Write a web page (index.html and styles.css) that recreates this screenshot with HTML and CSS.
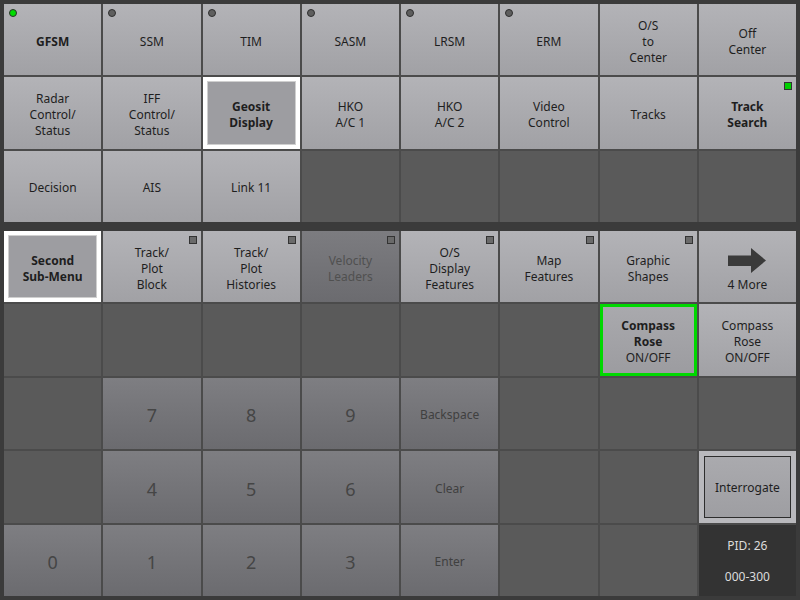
FILE: index.html
```html
<!DOCTYPE html>
<html>
<head>
<meta charset="utf-8">
<link rel="stylesheet" href="styles.css">
</head>
<body>
<div class="screen">
  <div class="panel top">
    <div class="btn bold"><span class="dot on"></span><span>GFSM</span></div>
    <div class="btn"><span class="dot"></span><span>SSM</span></div>
    <div class="btn"><span class="dot"></span><span>TIM</span></div>
    <div class="btn"><span class="dot"></span><span>SASM</span></div>
    <div class="btn"><span class="dot"></span><span>LRSM</span></div>
    <div class="btn"><span class="dot"></span><span>ERM</span></div>
    <div class="btn"><span>O/S<br>to<br>Center</span></div>
    <div class="btn"><span>Off<br>Center</span></div>

    <div class="btn"><span>Radar<br>Control/<br>Status</span></div>
    <div class="btn"><span>IFF<br>Control/<br>Status</span></div>
    <div class="btn bold sel"><span>Geosit<br>Display</span></div>
    <div class="btn"><span>HKO<br>A/C 1</span></div>
    <div class="btn"><span>HKO<br>A/C 2</span></div>
    <div class="btn"><span>Video<br>Control</span></div>
    <div class="btn"><span>Tracks</span></div>
    <div class="btn bold"><span class="sq on"></span><span>Track<br>Search</span></div>

    <div class="btn"><span>Decision</span></div>
    <div class="btn"><span>AIS</span></div>
    <div class="btn"><span>Link 11</span></div>
    <div class="empty"></div>
    <div class="empty"></div>
    <div class="empty"></div>
    <div class="empty"></div>
    <div class="empty"></div>
  </div>

  <div class="panel bottom">
    <div class="btn bold sel"><span>Second<br>Sub-Menu</span></div>
    <div class="btn"><span class="sq"></span><span>Track/<br>Plot<br>Block</span></div>
    <div class="btn"><span class="sq"></span><span>Track/<br>Plot<br>Histories</span></div>
    <div class="btn disabled"><span class="sq"></span><span>Velocity<br>Leaders</span></div>
    <div class="btn"><span class="sq"></span><span>O/S<br>Display<br>Features</span></div>
    <div class="btn"><span class="sq"></span><span>Map<br>Features</span></div>
    <div class="btn"><span class="sq"></span><span>Graphic<br>Shapes</span></div>
    <div class="btn more">
      <svg class="arrow" width="38" height="26" viewBox="0 0 38 26"><path d="M0 7.5H23V0L38 12.5L23 25V18H0Z" fill="#3a3a3a"/></svg>
      <span>4 More</span>
    </div>

    <div class="empty"></div>
    <div class="empty"></div>
    <div class="empty"></div>
    <div class="empty"></div>
    <div class="empty"></div>
    <div class="empty"></div>
    <div class="btn green"><span><b>Compass<br>Rose</b><br>ON/OFF</span></div>
    <div class="btn"><span>Compass<br>Rose<br>ON/OFF</span></div>

    <div class="empty"></div>
    <div class="btn key num"><span>7</span></div>
    <div class="btn key num"><span>8</span></div>
    <div class="btn key num"><span>9</span></div>
    <div class="btn key"><span>Backspace</span></div>
    <div class="empty"></div>
    <div class="empty"></div>
    <div class="empty"></div>

    <div class="empty"></div>
    <div class="btn key num"><span>4</span></div>
    <div class="btn key num"><span>5</span></div>
    <div class="btn key num"><span>6</span></div>
    <div class="btn key"><span>Clear</span></div>
    <div class="empty"></div>
    <div class="empty"></div>
    <div class="btn interrogate"><div class="inner">Interrogate</div></div>

    <div class="btn key num"><span>0</span></div>
    <div class="btn key num"><span>1</span></div>
    <div class="btn key num"><span>2</span></div>
    <div class="btn key num"><span>3</span></div>
    <div class="btn key"><span>Enter</span></div>
    <div class="empty"></div>
    <div class="empty"></div>
    <div class="pid"><span>PID: 26</span><span>000-300</span></div>
  </div>
</div>
</body>
</html>
```
FILE: styles.css
```css
* { box-sizing: border-box; }
html, body {
  margin: 0;
  padding: 0;
  width: 800px;
  height: 600px;
  overflow: hidden;
  background: #3b3b3b;
  font-family: "Noto Sans", "Open Sans", sans-serif;
  font-size: 12px;
  line-height: 16px;
  color: #1e1e1e;
}
.screen {
  padding: 4px;
  display: flex;
  flex-direction: column;
  gap: 9px;
  height: 600px;
}
.panel {
  display: grid;
  grid-template-columns: repeat(8, minmax(0, 1fr));
  gap: 2px;
  background: #4b4b4b;
}
.top {
  height: 218px;
  grid-template-rows: repeat(3, minmax(0, 1fr));
}
.bottom {
  height: 365px;
  grid-template-rows: repeat(5, minmax(0, 1fr));
}
.btn {
  position: relative;
  display: flex;
  align-items: center;
  justify-content: center;
  text-align: center;
  padding-top: 4px;
  background: linear-gradient(#b3b3b7, #a1a1a5);
}
.empty {
  background: #5a5a5a;
}
.bold { font-weight: 700; }
.sel {
  background: #9d9da1;
  border: 4px solid #ffffff;
  box-shadow: inset 0 0 0 1px #cfcfcf;
}
.green {
  background: linear-gradient(#a9a9ad, #9c9ca0);
  border: 3px solid #00d800;
}
.disabled {
  background: linear-gradient(#7c7c80, #6b6b6f);
  color: #505050;
}
.key {
  background: linear-gradient(#7e7e82, #6b6b6f);
  color: #404040;
}
.num {
  font-size: 18px;
  color: #454545;
}
.dot {
  position: absolute;
  left: 5px;
  top: 5px;
  width: 8px;
  height: 8px;
  border-radius: 50%;
  background: #5e5e5e;
  border: 1px solid #2e2e2e;
}
.dot.on { background: #00dd00; }
.sq {
  position: absolute;
  right: 4px;
  top: 5px;
  width: 8px;
  height: 8px;
  background: #6a6a6a;
  border: 1px solid #333;
}
.sq.on { background: #00d000; }
.more {
  flex-direction: column;
  gap: 3px;
  padding-top: 8px;
}
.arrow { display: block; }
.interrogate {
  padding: 5px;
  background: #b9b9bd;
}
.interrogate .inner {
  width: 100%;
  height: 100%;
  display: flex;
  align-items: center;
  justify-content: center;
  padding-top: 2px;
  border: 1px solid #2d2d2d;
  background: linear-gradient(#aaaaae, #9e9ea2);
}
.pid {
  background: #333333;
  color: #dcdcdc;
  display: flex;
  flex-direction: column;
  align-items: center;
  justify-content: center;
  gap: 15px;
  padding-top: 2px;
}
```
